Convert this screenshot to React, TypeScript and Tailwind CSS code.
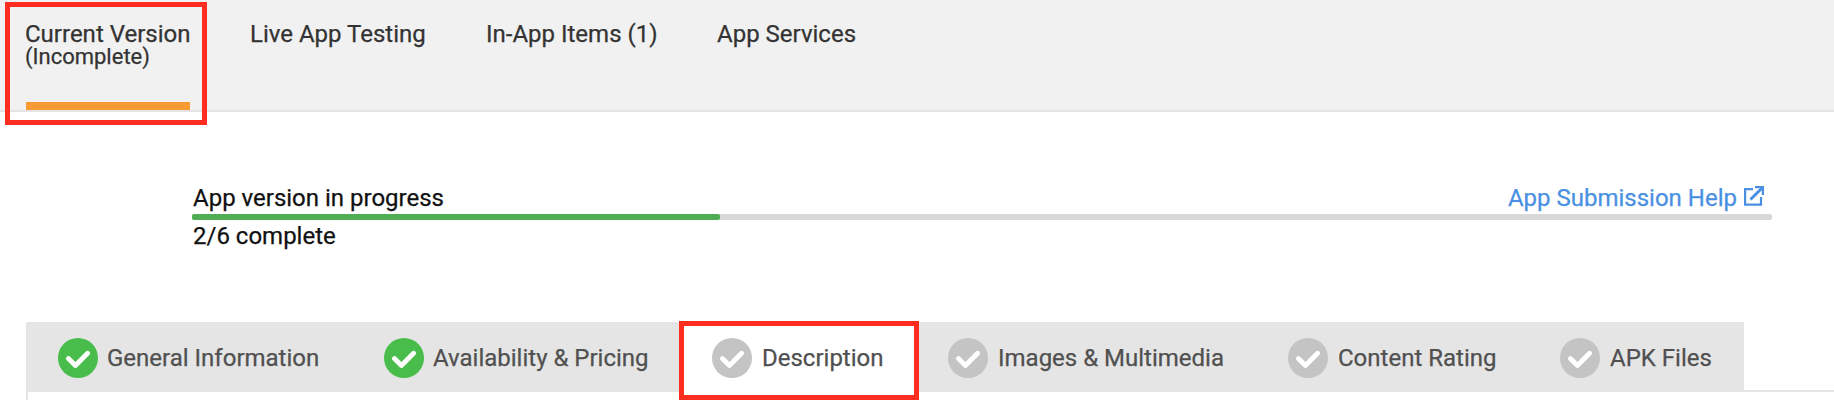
const tabs = [
  { label: "Current Version", note: "(Incomplete)", width: "w-[164px]" },
  { label: "Live App Testing", width: "w-[176px]" },
  { label: "In-App Items (1)", width: "w-[171px]" },
  { label: "App Services", width: "w-[140px]" },
];

const steps = [
  { label: "General Information", width: "w-[326px]", gap: "gap-[9px]", done: true },
  { label: "Availability & Pricing", width: "w-[328px]", gap: "gap-[9px]", done: true },
  { label: "Description", width: "w-[236px]", gap: "gap-2.5", active: true },
  { label: "Images & Multimedia", width: "w-[340px]", gap: "gap-2.5" },
  { label: "Content Rating", width: "w-[272px]", gap: "gap-2.5" },
  { label: "APK Files", width: "w-[216px]", gap: "gap-2.5" },
];

function StepIcon({ done }: { done?: boolean }) {
  return (
    <svg className="size-10 shrink-0" viewBox="0 0 40 40" fill="none">
      <circle cx="20" cy="20" r="20" fill={done ? "#49bd4c" : "#c4c4c4"} />
      <path
        d="M10.4 20.6L17.4 27.4L29.6 15.3"
        stroke="#fff"
        strokeWidth="4.9"
        strokeLinecap="round"
        strokeLinejoin="round"
      />
    </svg>
  );
}

function ExternalIcon() {
  return (
    <svg className="h-5 w-5" viewBox="0 0 20 20" fill="none" stroke="#4a90e2" strokeWidth="2.2">
      <path d="M9 3.1H1.1V18.6H17V11" />
      <path d="M11 1.1H18.9V9" />
      <path d="M18.3 1.7L6.5 13.5" strokeWidth="3" />
    </svg>
  );
}

export default function App() {
  return (
    <div className="relative flex h-[400px] w-[1834px] flex-col overflow-hidden bg-white font-['Roboto',sans-serif] text-[24px] leading-[28px] [-webkit-text-stroke:0.25px]">
      <nav className="flex h-28 shrink-0 gap-[60px] border-b-2 border-[#e4e4e4] bg-[#f1f1f1] pl-[26px] text-[#333]">
        {tabs.map((tab) => (
          <div
            key={tab.label}
            className={`${tab.width} flex flex-col whitespace-nowrap pt-[22px] leading-[24px] ${tab.note ? "border-b-8 border-[#f79a32]" : ""}`}
          >
            <span className={tab.note ? "-ml-px" : ""}>{tab.label}</span>
            {tab.note && <span className="-ml-px text-[22px] leading-[22px]">{tab.note}</span>}
          </div>
        ))}
      </nav>

      <section className="ml-48 flex h-[210px] w-[1580px] shrink-0 flex-col pt-[72px] text-[#111]">
        <div className="flex h-[30px] items-start justify-between">
          <span className="pl-px">App version in progress</span>
          <a className="flex gap-[7px] pr-2 text-[#4a90e2]">
            App Submission Help
            <span className="mt-0.5">
              <ExternalIcon />
            </span>
          </a>
        </div>
        <div className="h-1.5 w-full rounded-[2px] bg-[#d8d8d8]">
          <div className="h-1.5 w-[528px] rounded-[2px] bg-[#4fae53]" />
        </div>
        <span className="mt-0.5 pl-px">2/6 complete</span>
      </section>

      <main className="ml-[26px] flex grow flex-col">
        <div className="flex h-[70px] shrink-0 text-[#505050]">
          {steps.map((step) => (
            <div
              key={step.label}
              className={`${step.width} ${step.gap} flex shrink-0 items-start whitespace-nowrap pl-8 pt-4 ${step.active ? "bg-white" : "bg-[#e5e5e5]"}`}
            >
              <StepIcon done={step.done} />
              <span className="mt-1.5">{step.label}</span>
            </div>
          ))}
          <div className="grow border-b-2 border-[#e5e5e5]" />
        </div>
        <div className="grow border-l-2 border-[#e5e5e5]" />
      </main>

      <div className="absolute left-[5px] top-[2px] h-[123px] w-[202px] border-[5px] border-[#ff2c20]" />
      <div className="absolute left-[679px] top-[321px] h-[79px] w-[240px] border-[5px] border-[#ff2c20]" />
    </div>
  );
}
